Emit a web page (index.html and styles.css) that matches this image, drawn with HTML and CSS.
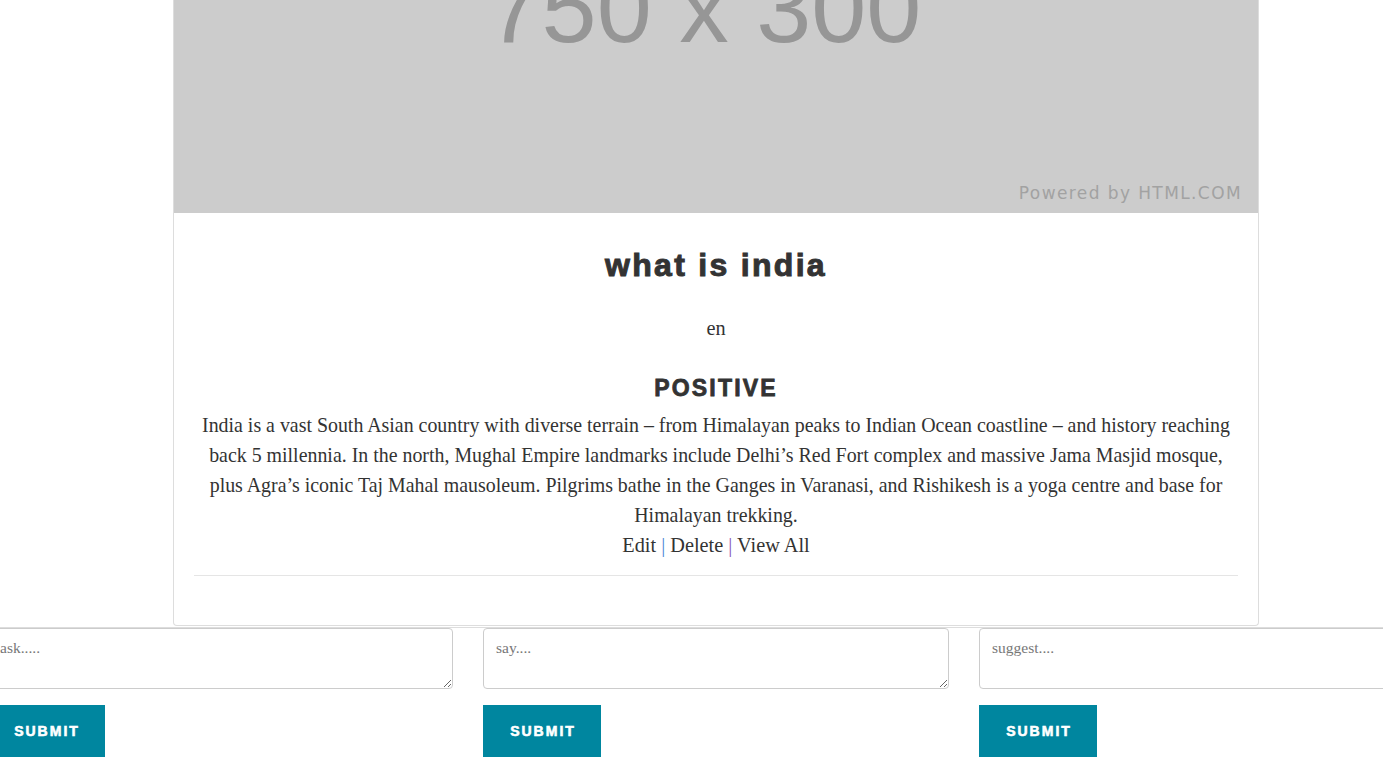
FILE: index.html
```html
<!DOCTYPE html>
<html lang="en">
<head>
<meta charset="utf-8">
<title>what is india</title>
<link rel="stylesheet" href="styles.css">
</head>
<body>
<div class="card">
  <svg class="card-img" width="1084" height="213" viewBox="0 0 1084 213" xmlns="http://www.w3.org/2000/svg">
    <rect width="1084" height="213" fill="#cccccc"/>
    <text x="530" y="42" text-anchor="middle" font-family="Liberation Sans, Arial, sans-serif" font-size="99" fill="#969696">750 x 300</text>
    <text x="1068" y="199" text-anchor="end" font-family="DejaVu Sans, sans-serif" font-size="17" letter-spacing="1.4" fill="#a2a2a2">Powered by HTML.COM</text>
  </svg>
  <div class="card-body">
    <h2 class="title">what is india</h2>
    <p class="lang">en</p>
    <h3 class="sentiment">POSITIVE</h3>
    <p class="text">India is a vast South Asian country with diverse terrain – from Himalayan peaks to Indian Ocean coastline – and history reaching back 5 millennia. In the north, Mughal Empire landmarks include Delhi’s Red Fort complex and massive Jama Masjid mosque, plus Agra’s iconic Taj Mahal mausoleum. Pilgrims bathe in the Ganges in Varanasi, and Rishikesh is a yoga centre and base for Himalayan trekking.</p>
    <p class="actions"><a href="#">Edit</a> <span class="sep sep-blue">|</span> <a href="#">Delete</a> <span class="sep sep-purple">|</span> <a href="#">View All</a></p>
    <hr class="divider">
  </div>
</div>
<div class="form-row">
  <form class="col">
    <textarea class="box" placeholder="ask....."></textarea>
    <button type="button" class="submit">SUBMIT</button>
  </form>
  <form class="col">
    <textarea class="box" placeholder="say...."></textarea>
    <button type="button" class="submit">SUBMIT</button>
  </form>
  <form class="col">
    <textarea class="box" placeholder="suggest...."></textarea>
    <button type="button" class="submit">SUBMIT</button>
  </form>
</div>
</body>
</html>
```
FILE: styles.css
```css
html, body {
  margin: 0;
  padding: 0;
  overflow: hidden;
  background: #fff;
}
body {
  font-family: "Liberation Serif", "Times New Roman", serif;
  color: #333;
}
.card {
  margin-left: 173px;
  width: 1084px;
  border: 1px solid #dddddd;
  border-top: none;
  border-radius: 0 0 4px 4px;
}
.card-img {
  display: block;
}
.card-body {
  padding: 0 20px 49px;
  text-align: center;
}
.title {
  font-family: "Liberation Sans", Arial, sans-serif;
  font-weight: bold;
  font-size: 32px;
  line-height: 35px;
  letter-spacing: 2.3px;
  -webkit-text-stroke: 1px #333;
  margin: 35px 0 30px;
  color: #333;
}
.lang {
  font-size: 20.3px;
  line-height: 30px;
  margin: 0 0 33px;
}
.sentiment {
  font-family: "Liberation Sans", Arial, sans-serif;
  font-weight: bold;
  font-size: 23px;
  line-height: 25px;
  letter-spacing: 2.2px;
  -webkit-text-stroke: 0.8px #333;
  margin: 0 0 9px;
  color: #333;
}
.text {
  font-size: 19.9px;
  line-height: 30px;
  margin: 0;
}
.actions {
  font-size: 20.3px;
  line-height: 30px;
  margin: 0;
}
.actions a {
  color: #333;
  text-decoration: none;
}
.sep-blue { color: #4a86d6; }
.sep-purple { color: #8552b8; }
.divider {
  border: none;
  border-top: 1px solid #e5e5e5;
  margin: 15px 0 0;
}
.form-row {
  margin-top: 1px;
  margin-left: -28px;
  width: 1488px;
  border-top: 1px solid #dddddd;
  display: grid;
  grid-template-columns: repeat(3, 1fr);
}
.col {
  padding: 0 15px;
  margin: 0;
}
.box {
  display: block;
  box-sizing: border-box;
  width: 100%;
  height: 61px;
  margin: 0;
  border: 1px solid #cccccc;
  border-radius: 4px;
  padding: 10px 12px;
  font-family: "Liberation Serif", "Times New Roman", serif;
  font-size: 15.5px;
  color: #555;
}
.box::placeholder {
  color: #777;
}
.submit {
  margin-top: 16px;
  width: 118px;
  height: 52px;
  padding: 0 0 0 2px;
  border: none;
  border-radius: 0;
  background: #00869f;
  color: #fff;
  font-family: "Liberation Sans", Arial, sans-serif;
  font-weight: bold;
  font-size: 14px;
  letter-spacing: 2px;
  -webkit-text-stroke: 0.6px #fff;
}
```
